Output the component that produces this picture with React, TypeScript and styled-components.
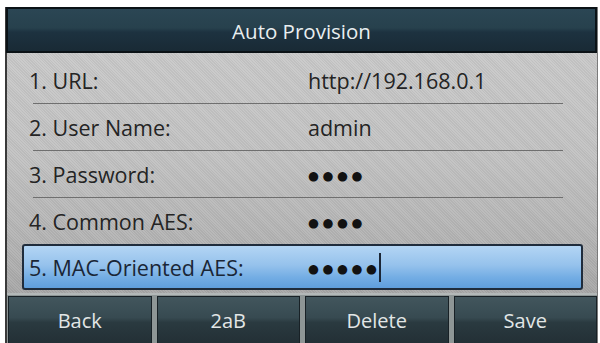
import React from "react";
import styled, { createGlobalStyle } from "styled-components";

const GlobalStyle = createGlobalStyle`
  html, body { margin: 0; padding: 0; background: #ffffff; }
  body { width: 600px; height: 343px; overflow: hidden; font-family: "Open Sans", "Noto Sans", sans-serif; }
`;

const Screen = styled.div`
  margin: 7px 3px 0 5px;
  width: 590px;
  height: 340px;
  display: flex;
  flex-direction: column;
  border-left: 2px solid #3a3a3a;
  border-right: 1px solid #7a7a7a;
  background:
    repeating-linear-gradient(45deg, rgba(255,255,255,0.05) 0 1px, rgba(0,0,0,0.04) 1px 2px),
    linear-gradient(to bottom, #cccccc 0%, #c2c2c2 45%, #b0b0b0 75%, #9a9a9a 100%);
`;

const TitleBar = styled.div`
  height: 40px;
  margin-left: -1px;
  border: 2px solid #0b1216;
  display: flex;
  align-items: center;
  justify-content: center;
  padding-top: 2px;
  background: linear-gradient(to bottom, #2b4654 0%, #27414d 45%, #1d3240 55%, #192a35 100%);
  color: #e8eef0;
  font-size: 20.5px;
`;

const List = styled.div`
  display: flex;
  flex-direction: column;
  padding-top: 4px;
`;

const Row = styled.div<{ $line?: boolean }>`
  height: 46px;
  margin: 0 34px 0 26px;
  display: grid;
  grid-template-columns: 275px 1fr;
  align-items: center;
  border-bottom: 1px solid ${(p) => (p.$line ? "#6f6f6f" : "transparent")};
  color: #242424;
  font-size: 21.5px;
`;

const ActiveRow = styled.div`
  height: 42px;
  margin: -1px 14px 0 15px;
  padding-left: 5px;
  display: grid;
  grid-template-columns: 279px 1fr;
  align-items: center;
  border: 2px solid #1f2c3c;
  border-radius: 3px;
  background: linear-gradient(to bottom, #b3d5f4 0%, #96c2ec 45%, #73ade4 75%, #5f9edc 100%);
  color: #1a2636;
  font-size: 21.5px;
`;

const Label = styled.span<{ $shift?: number }>`
  margin-left: ${(p) => p.$shift ?? 0}px;
  white-space: nowrap;
`;

const Value = styled.span`
  display: flex;
  align-items: center;
  white-space: nowrap;
`;

const Dots = styled.span`
  font-family: "DejaVu Sans", sans-serif;
  font-size: 12.5px;
  letter-spacing: 3.6px;
  color: #121212;
  padding-top: 3px;
`;

const Caret = styled.span`
  display: inline-block;
  width: 2px;
  height: 29px;
  margin-left: -2px;
  background: #1b2636;
`;

const ButtonBar = styled.div`
  margin-top: 3px;
  padding: 3px 0 0 1px;
  display: grid;
  grid-template-columns: repeat(4, 1fr);
  gap: 5px;
  background: linear-gradient(to bottom, #b3b8b8 0, #b3b8b8 2px, #8e9696 2px);
  flex: 1;
`;

const SoftKey = styled.div`
  border: 1px solid #182126;
  display: flex;
  align-items: flex-start;
  justify-content: center;
  padding-top: 10px;
  background: linear-gradient(to bottom, #42565d 0%, #374a51 42%, #2a3a40 52%, #222e34 100%);
  color: #e2e6e6;
  font-size: 20px;
`;

const rows = [
  { label: "1. URL:", value: "http://192.168.0.1", line: true },
  { label: "2. User Name:", value: "admin", line: true },
  { label: "3. Password:", value: "●●●●", dots: true, line: true },
  { label: "4. Common AES:", value: "●●●●", dots: true, line: false },
];

const keys = ["Back", "2aB", "Delete", "Save"];

export default function App() {
  return (
    <>
      <GlobalStyle />
      <Screen>
        <TitleBar>Auto Provision</TitleBar>
        <List>
          {rows.map((r) => (
            <Row key={r.label} $line={r.line}>
              <Label $shift={-4}>{r.label}</Label>
              <Value>{r.dots ? <Dots>{r.value}</Dots> : r.value}</Value>
            </Row>
          ))}
          <ActiveRow>
            <Label>5. MAC-Oriented AES:</Label>
            <Value>
              <Dots>●●●●●</Dots>
              <Caret />
            </Value>
          </ActiveRow>
        </List>
        <ButtonBar>
          {keys.map((k) => (
            <SoftKey key={k}>{k}</SoftKey>
          ))}
        </ButtonBar>
      </Screen>
    </>
  );
}
